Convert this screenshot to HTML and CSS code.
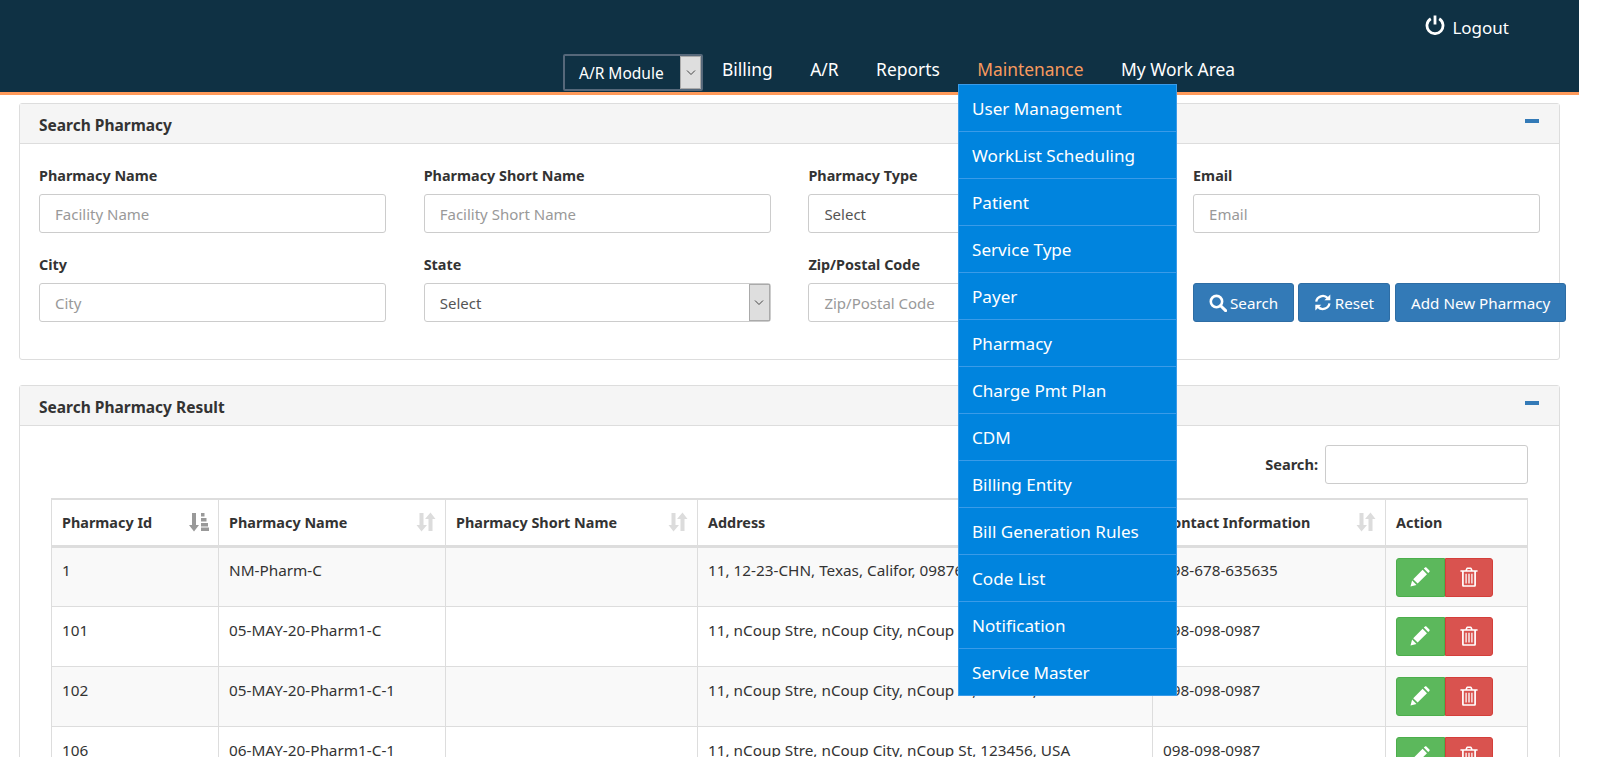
FILE: index.html
```html
<!DOCTYPE html>
<html lang="en">
<head>
    <meta charset="UTF-8">
    <meta name="viewport" content="width=device-width, initial-scale=1.0">
    <title>Pharmacy</title>
    <link rel="stylesheet" href="styles.css">
</head>
<body>
    <svg class="icon-defs" width="0" height="0">
        <symbol id="i-pencil" viewBox="0 0 20 20"><path d="M0.500 19.500l1.600-6 4.400 4.400zM3.200 12.200l9.400-9.400 4.400 4.400-9.400 9.400zM13.800 1.600l1.200-1.100c.4-.4 1-.4 1.400 0l3 3c.4.4.4 1 0 1.400l-1.200 1.200z"/></symbol>
        <symbol id="i-trash" viewBox="0 0 18 21"><path fill-rule="evenodd" d="M0 3.500h5.200l.9-2.200C6.300.9 6.700.6 7.200.6h3.600c.5 0 .9.3 1.100.7l.9 2.200H18v1.600H16.300v14c0 .9-.6 1.700-1.500 1.700H3.200c-.9 0-1.500-.8-1.500-1.700v-14H0zM7 3.500h4l-.5-1.300H7.500zM3.500 5.100v13.700c0 .2.1.3.2.3h10.600c.1 0 .2-.1.2-.3V5.100zM5.300 7h1.300v10.300H5.300zM8.300 7h1.400v10.300H8.300zM11.400 7h1.300v10.300h-1.300z"/></symbol>
        <symbol id="i-sort" viewBox="0 0 20 20"><path d="M3.500 1h4v12H11L5.500 19.500 0.500 13h3zM12.500 7h4v12h-4V7H9L14.500 0.500 19.500 7z"/></symbol>
        <symbol id="i-sort-asc" viewBox="0 0 20 20"><path d="M3 1h4v12H10L5 19.500 0 13h3zM12 1h3.500v3.500H12zM12 6h5.500v3.500H12zM12 11h7v3.500h-7zM12 15.500h8v3.500h-8z"/></symbol>
    </svg>

    <header class="top-bar">
        <div class="logout-row">
            <a class="logout">
                <svg class="power" viewBox="0 0 20 20" fill="none" stroke="#fff" stroke-width="2.800"><path d="M5.800 3.800a8 8 0 1 0 8.400 0"/><path d="M10 0.500v9"/></svg>
                Logout
            </a>
        </div>
        <nav class="main-nav">
            <div class="module-select">
                <span class="module-name">A/R Module</span>
                <span class="select-arrow"><svg viewBox="0 0 10 6" width="10" height="6" fill="none" stroke="#444"><path d="M1 .5l4 4 4-4"/></svg></span>
            </div>
            <a class="nav-link">Billing</a>
            <a class="nav-link">A/R</a>
            <a class="nav-link">Reports</a>
            <a class="nav-link active">Maintenance</a>
            <a class="nav-link">My Work Area</a>
        </nav>
    </header>

    <ul class="dropdown">
        <li>User Management</li>
        <li>WorkList Scheduling</li>
        <li>Patient</li>
        <li>Service Type</li>
        <li>Payer</li>
        <li>Pharmacy</li>
        <li>Charge Pmt Plan</li>
        <li>CDM</li>
        <li>Billing Entity</li>
        <li>Bill Generation Rules</li>
        <li>Code List</li>
        <li>Notification</li>
        <li>Service Master</li>
    </ul>

    <main class="content">
        <section class="panel search-panel">
            <div class="panel-heading">
                <h3>Search Pharmacy</h3>
                <span class="collapse-bar"></span>
            </div>
            <div class="panel-body form-grid">
                <div class="field">
                    <label>Pharmacy Name</label>
                    <input class="form-control" placeholder="Facility Name">
                </div>
                <div class="field">
                    <label>Pharmacy Short Name</label>
                    <input class="form-control" placeholder="Facility Short Name">
                </div>
                <div class="field">
                    <label>Pharmacy Type</label>
                    <div class="form-control select-box">
                        <span>Select</span>
                        <span class="select-arrow"><svg viewBox="0 0 10 6" width="10" height="6" fill="none" stroke="#444"><path d="M1 .5l4 4 4-4"/></svg></span>
                    </div>
                </div>
                <div class="field">
                    <label>Email</label>
                    <input class="form-control" placeholder="Email">
                </div>
                <div class="field">
                    <label>City</label>
                    <input class="form-control" placeholder="City">
                </div>
                <div class="field">
                    <label>State</label>
                    <div class="form-control select-box">
                        <span>Select</span>
                        <span class="select-arrow"><svg viewBox="0 0 10 6" width="10" height="6" fill="none" stroke="#444"><path d="M1 .5l4 4 4-4"/></svg></span>
                    </div>
                </div>
                <div class="field">
                    <label>Zip/Postal Code</label>
                    <input class="form-control" placeholder="Zip/Postal Code">
                </div>
                <div class="field button-field">
                    <button class="btn search-btn">
                        <svg viewBox="0 0 18 18" width="18" height="18" fill="none" stroke="#fff" stroke-width="2.600"><circle cx="7.500" cy="7.500" r="5.700"/><path d="M11.700 11.700l5 5" stroke-linecap="round" stroke-width="3"/></svg>
                        Search
                    </button>
                    <button class="btn reset-btn">
                        <svg viewBox="0 0 20 20" width="19" height="19" fill="none" stroke="#fff" stroke-width="2.600"><path d="M2.500 9a7.600 7.600 0 0 1 13-4"/><path d="M17.500 11a7.600 7.600 0 0 1-13 4"/><path d="M18.500 0.800v6.700h-6.700z" fill="#fff" stroke="none"/><path d="M1.500 19.200v-6.700h6.700z" fill="#fff" stroke="none"/></svg>
                        Reset
                    </button>
                    <button class="btn">Add New Pharmacy</button>
                </div>
            </div>
        </section>

        <section class="panel result-panel">
            <div class="panel-heading">
                <h3>Search Pharmacy Result</h3>
                <span class="collapse-bar"></span>
            </div>
            <div class="panel-body result-body">
                <div class="table-search">
                    <label>Search:</label>
                    <input class="search-input">
                </div>
                <table class="result-table">
                    <thead>
                        <tr>
                            <th class="col-id"><div class="th-inner">Pharmacy Id <svg class="sort-icon active-sort"><use href="#i-sort-asc"/></svg></div></th>
                            <th class="col-name"><div class="th-inner">Pharmacy Name <svg class="sort-icon"><use href="#i-sort"/></svg></div></th>
                            <th class="col-short"><div class="th-inner">Pharmacy Short Name <svg class="sort-icon"><use href="#i-sort"/></svg></div></th>
                            <th class="col-address"><div class="th-inner">Address <svg class="sort-icon"><use href="#i-sort"/></svg></div></th>
                            <th class="col-contact"><div class="th-inner">Contact Information <svg class="sort-icon"><use href="#i-sort"/></svg></div></th>
                            <th class="col-action">Action</th>
                        </tr>
                    </thead>
                    <tbody>
                        <tr>
                            <td>1</td><td>NM-Pharm-C</td><td></td>
                            <td>11, 12-23-CHN, Texas, Califor, 09876, USA</td>
                            <td>098-678-635635</td>
                            <td class="actions"><a class="act edit"><svg><use href="#i-pencil"/></svg></a><a class="act del"><svg><use href="#i-trash"/></svg></a></td>
                        </tr>
                        <tr>
                            <td>101</td><td>05-MAY-20-Pharm1-C</td><td></td>
                            <td>11, nCoup Stre, nCoup City, nCoup St, 123456, USA</td>
                            <td>098-098-0987</td>
                            <td class="actions"><a class="act edit"><svg><use href="#i-pencil"/></svg></a><a class="act del"><svg><use href="#i-trash"/></svg></a></td>
                        </tr>
                        <tr>
                            <td>102</td><td>05-MAY-20-Pharm1-C-1</td><td></td>
                            <td>11, nCoup Stre, nCoup City, nCoup St, 123456, USA</td>
                            <td>098-098-0987</td>
                            <td class="actions"><a class="act edit"><svg><use href="#i-pencil"/></svg></a><a class="act del"><svg><use href="#i-trash"/></svg></a></td>
                        </tr>
                        <tr>
                            <td>106</td><td>06-MAY-20-Pharm1-C-1</td><td></td>
                            <td>11, nCoup Stre, nCoup City, nCoup St, 123456, USA</td>
                            <td>098-098-0987</td>
                            <td class="actions"><a class="act edit"><svg><use href="#i-pencil"/></svg></a><a class="act del"><svg><use href="#i-trash"/></svg></a></td>
                        </tr>
                    </tbody>
                </table>
            </div>
        </section>
    </main>
</body>
</html>
```

FILE: styles.css
```css
html {
    overflow: hidden;
    height: 757px;
}

body {
    margin: 0;
    width: 1579px;
    height: 757px;
    overflow: hidden;
    position: relative;
    font-family: "Noto Sans", sans-serif;
    font-size: 15px;
    color: #333;
    background-color: #fff;
}

.icon-defs {
    position: absolute;
}

/* header */
.top-bar {
    height: 92px;
    background-color: #0f3144;
    border-bottom: 3px solid #ff9a5a;
    color: #fff;
}

.logout-row {
    height: 54px;
    display: flex;
    justify-content: flex-end;
    padding-right: 70px;
}

.logout {
    display: flex;
    align-items: center;
    gap: 7px;
    height: 54px;
    font-size: 17px;
}

.power {
    width: 20px;
    height: 20px;
    margin-top: -4px;
}

.main-nav {
    display: flex;
    align-items: flex-start;
    padding-left: 563px;
}

.module-select {
    width: 140px;
    height: 37px;
    box-sizing: border-box;
    display: flex;
    border: 2px solid #56687a;
    border-radius: 2px;
    font-size: 15.5px;
}

.module-name {
    flex: 1;
    padding: 6px 0 0 14px;
}

.select-arrow {
    width: 21px;
    display: flex;
    align-items: center;
    justify-content: center;
    background-color: #dedede;
    border: 1px solid #aaa;
    box-sizing: border-box;
}

.nav-link {
    font-size: 17.4px;
    line-height: 30px;
    margin-left: 37.500px;
}

.module-select + .nav-link {
    margin-left: 19px;
}

.nav-link.active {
    color: #f79a5e;
}

/* dropdown menu */
.dropdown {
    list-style: none;
    position: absolute;
    left: 958px;
    top: 84px;
    z-index: 5;
    margin: 0;
    padding: 0;
    width: 219px;
    box-sizing: border-box;
    background-color: #0084de;
    border: 1px solid #3a9be8;
    color: #fff;
    font-size: 17.1px;
}

.dropdown li {
    height: 47px;
    box-sizing: border-box;
    padding: 12px 0 0 13px;
    border-bottom: 1px solid #3a9be8;
}

.dropdown li:last-child {
    border-bottom: none;
    height: 46px;
}

/* panels */
.content {
    padding: 8px 19px 0;
}

.panel {
    border: 1px solid #ddd;
    border-radius: 3px;
    margin-bottom: 25px;
    width: 1541px;
    box-sizing: border-box;
}

.panel-heading {
    height: 40px;
    box-sizing: border-box;
    background-color: #f5f5f5;
    border-bottom: 1px solid #ddd;
    display: flex;
    justify-content: space-between;
    padding: 0 20px 0 19px;
}

.panel-heading h3 {
    margin: 0;
    font-size: 15.5px;
    line-height: 42px;
    font-weight: 700;
}

.collapse-bar {
    width: 14px;
    height: 4px;
    margin-top: 15px;
    background-color: #337ab7;
}

.form-grid {
    display: grid;
    grid-template-columns: repeat(4, 347px);
    column-gap: 37.700px;
    row-gap: 18px;
    padding: 18px 19px 37px;
}

.field label {
    display: block;
    font-size: 14.4px;
    font-weight: 700;
    line-height: 20px;
    margin: 4px 0 8px;
}

.form-control {
    display: block;
    width: 100%;
    height: 39px;
    box-sizing: border-box;
    border: 1px solid #ccc;
    border-radius: 3px;
    padding: 0 15px;
    font: inherit;
    font-size: 15px;
    color: #555;
    background-color: #fff;
}

.form-control::placeholder {
    color: #999;
}

.select-box {
    display: flex;
    justify-content: space-between;
    align-items: center;
    padding-right: 0;
}

.select-box .select-arrow {
    height: 37px;
}

.button-field {
    display: flex;
    align-self: end;
    width: 373px;
    gap: 4px;
}

.btn {
    height: 39px;
    box-sizing: border-box;
    border: 1px solid #2e6da4;
    border-radius: 3px;
    background-color: #337ab7;
    color: #fff;
    font: inherit;
    font-size: 15.2px;
    padding: 0 15px;
    display: flex;
    align-items: center;
    gap: 3px;
    white-space: nowrap;
}

.search-btn {
    width: 101px;
}

.reset-btn {
    width: 92px;
}

.btn:last-child {
    margin-left: 1px;
    width: 171px;
}

/* result table */
.result-body {
    padding: 19px 31px 0;
}

.table-search {
    display: flex;
    justify-content: flex-end;
    align-items: center;
    gap: 7px;
    margin-bottom: 14px;
}

.table-search label {
    font-size: 14.6px;
    font-weight: 700;
    margin-bottom: 2px;
}

.search-input {
    width: 203px;
    height: 39px;
    box-sizing: border-box;
    border: 1px solid #ccc;
    border-radius: 3px;
}

.result-table {
    width: 1477px;
    table-layout: fixed;
    border-collapse: collapse;
    border: 1px solid #ddd;
    font-size: 15.3px;
}

.result-table th {
    height: 47px;
    box-sizing: border-box;
    padding: 0 9px 0 10px;
    border: 1px solid #ddd;
    border-top-width: 2px;
    border-bottom-width: 3px;
    text-align: left;
    font-size: 14.4px;
    font-weight: 700;
}

.th-inner {
    display: flex;
    justify-content: space-between;
    align-items: center;
}

.sort-icon {
    width: 20px;
    height: 20px;
    fill: #dcdcdc;
}

.active-sort {
    fill: #999;
}

.result-table td {
    height: 60px;
    box-sizing: border-box;
    padding: 12px 10px 0;
    border: 1px solid #ddd;
    vertical-align: top;
    line-height: 20px;
}

.result-table tbody tr + tr td {
    padding-top: 13px;
}

.result-table tbody tr:nth-child(odd) {
    background-color: #f9f9f9;
}

.col-id { width: 167px; }
.col-name { width: 227px; }
.col-short { width: 252px; }
.col-address { width: 455px; }
.col-contact { width: 233px; }

.result-table td.actions,
.result-table tbody tr + tr td.actions {
    padding: 10px 10px 0;
}

.actions {
    white-space: nowrap;
}

.act {
    display: inline-flex;
    align-items: center;
    justify-content: center;
    width: 48.500px;
    height: 39px;
    box-sizing: border-box;
    border-radius: 3px;
    vertical-align: top;
    fill: #fff;
}

.act svg {
    width: 20px;
    height: 20px;
}

.edit {
    background-color: #5cb85c;
    border: 1px solid #4cae4c;
    border-top-right-radius: 0;
    border-bottom-right-radius: 0;
}

.del {
    background-color: #d9534f;
    border: 1px solid #d43f3a;
    border-top-left-radius: 0;
    border-bottom-left-radius: 0;
}
```
